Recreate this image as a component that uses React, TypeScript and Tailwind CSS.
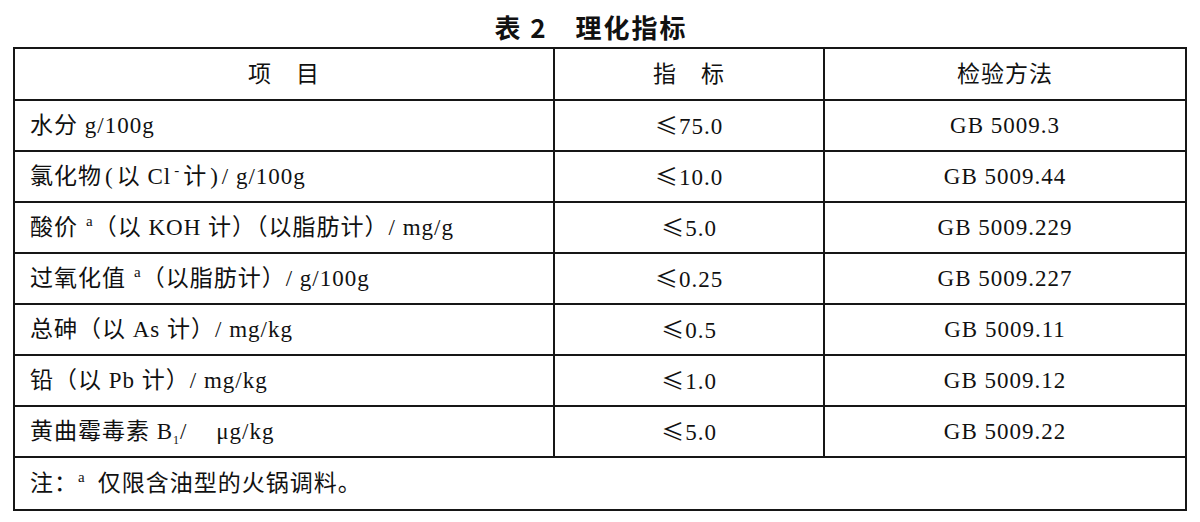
import React from 'react';

const serif = "font-['Liberation_Serif','Noto_Sans_CJK_SC',serif]";
const cjk = "font-['Noto_Sans_CJK_SC',sans-serif]";

type Row = {
  item: React.ReactNode;
  limit: string;
  method: string;
};

const Sup: React.FC<{ children: React.ReactNode; className?: string }> = ({ children, className = '' }) => (
  <span className={`relative top-[-9px] text-[15px] leading-none ${className}`}>{children}</span>
);

const Le = () => <span className={cjk}>≤</span>;

const rows: Row[] = [
  { item: <>水分 g/100g</>, limit: '75.0', method: 'GB 5009.3' },
  {
    item: (
      <>
        氯化物<span className="mx-[3px]">(</span>以 Cl<Sup className="mx-[3px]">-</Sup>计<span className="mx-[3px]">)</span>/ g/100g
      </>
    ),
    limit: '10.0',
    method: 'GB 5009.44',
  },
  {
    item: (
      <>
        酸价<Sup className="ml-[8px]">a</Sup>（以 KOH 计）（以脂肪计）/ mg/g
      </>
    ),
    limit: '5.0',
    method: 'GB 5009.229',
  },
  {
    item: (
      <>
        过氧化值<Sup className="ml-[8px]">a</Sup>（以脂肪计）/ g/100g
      </>
    ),
    limit: '0.25',
    method: 'GB 5009.227',
  },
  { item: <>总砷（以 As 计）/ mg/kg</>, limit: '0.5', method: 'GB 5009.11' },
  { item: <>铅（以 Pb 计）/ mg/kg</>, limit: '1.0', method: 'GB 5009.12' },
  {
    item: (
      <>
        黄曲霉毒素 B
        <span className="relative top-[5px] text-[12px] leading-none">1</span>/ <span className="ml-[22px]">μ</span>g/kg
      </>
    ),
    limit: '5.0',
    method: 'GB 5009.22',
  },
];

const cell = 'border-2 border-[#161616] p-0 align-middle';

export default function App() {
  return (
    <div className={`w-[1200px] h-[522px] bg-white text-[#111] ${serif}`}>
      <div
        className={`h-[47px] flex items-center justify-center pt-[6px] pr-[18px] text-[26px] tracking-[2px] font-bold leading-none ${cjk}`}
      >
        表 2　理化指标
      </div>
      <table className="ml-[13px] w-[1174px] table-fixed border-collapse text-[23px] tracking-[1px] leading-none">
        <colgroup>
          <col className="w-[540px]" />
          <col className="w-[270px]" />
          <col />
        </colgroup>
        <thead>
          <tr className="h-[52px]">
            <th className={`${cell} font-normal text-center`}>项　目</th>
            <th className={`${cell} font-normal text-center`}>指　标</th>
            <th className={`${cell} font-normal text-center`}>检验方法</th>
          </tr>
        </thead>
        <tbody>
          {rows.map((r, i) => (
            <tr key={i} className="h-[51px]">
              <td className={`${cell} pl-[15px] whitespace-nowrap`}>{r.item}</td>
              <td className={`${cell} text-center`}>
                <Le />
                {r.limit}
              </td>
              <td className={`${cell} text-center`}>{r.method}</td>
            </tr>
          ))}
          <tr className="h-[53px]">
            <td colSpan={3} className={`${cell} pl-[15px]`}>
              注：<Sup>a</Sup><span className="ml-[12px]">仅限含油型的火锅调料。</span>
            </td>
          </tr>
        </tbody>
      </table>
    </div>
  );
}
